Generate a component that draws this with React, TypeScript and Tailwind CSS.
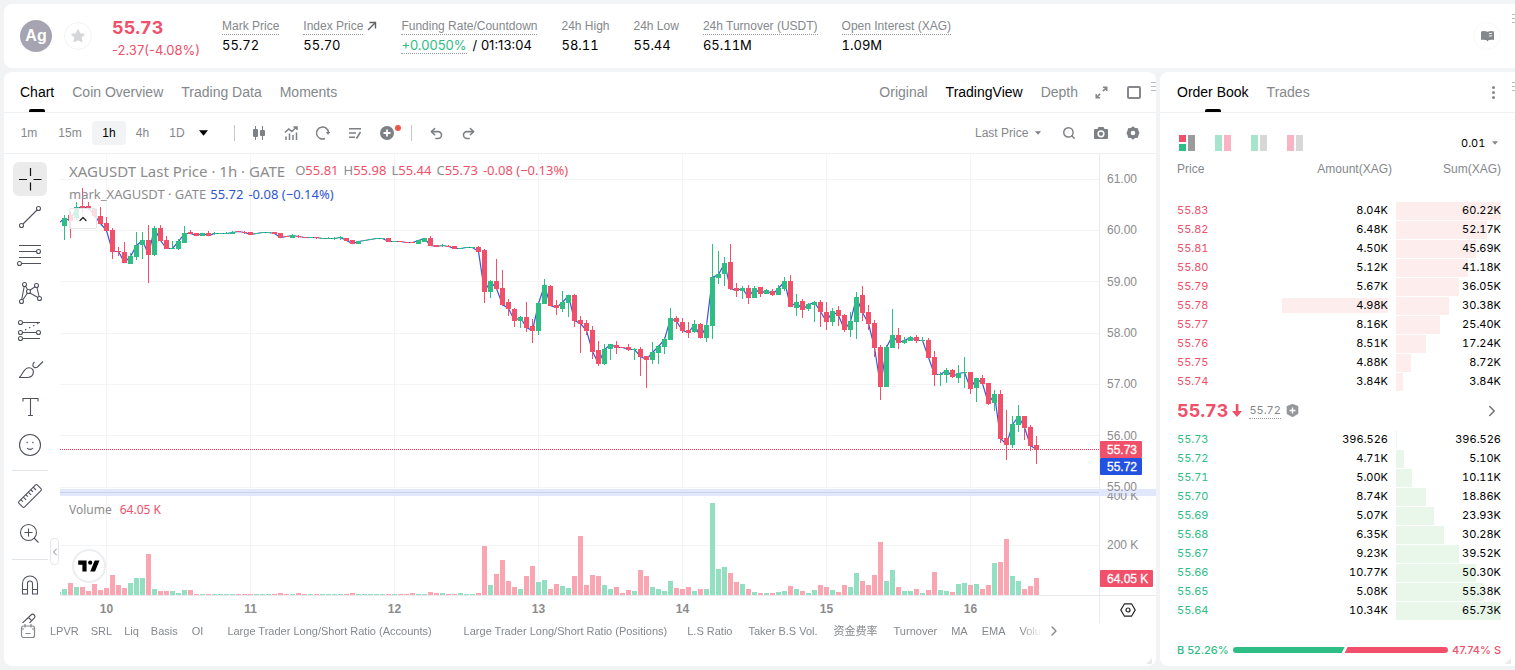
import React from "react";
import { Search, ChevronRight, ChevronUp, ChevronLeft, Undo2, Redo2 } from "lucide-react";

const UP = "#2ebd85";
const DOWN = "#f0506a";

/* [direction, body top, body bottom, wick top, wick bottom, volume] */
type Candle = ["g" | "r", number, number, number, number, number];

const candles: Candle[] = [
  ["g", 218, 226, 215, 240, 6], ["r", 215, 221, 211, 238, 12], ["g", 207, 218, 202, 220, 8], ["r", 206, 208, 188, 212, 8],
  ["r", 206, 208, 202, 210, 4], ["r", 209, 216, 208, 218, 11], ["r", 216, 224, 207, 224, 5], ["r", 223, 231, 217, 231, 7],
  ["r", 230, 252, 228, 259, 20], ["r", 251, 252, 247, 256, 10], ["r", 252, 263, 242, 263, 7], ["g", 256, 264, 253, 264, 12],
  ["g", 245, 257, 232, 260, 17], ["g", 240, 245, 232, 259, 17], ["r", 240, 255, 225, 283, 41], ["g", 228, 255, 226, 256, 6],
  ["r", 228, 241, 225, 241, 4], ["r", 240, 249, 236, 249, 4], ["g", 248, 249, 241, 249, 4], ["g", 241, 249, 239, 250, 2],
  ["g", 233, 243, 226, 243, 5], ["r", 232, 234, 230, 234, 5], ["r", 233, 236, 233, 236, 1], ["g", 233, 236, 233, 236, 1],
  ["r", 233, 236, 231, 236, 1], ["g", 233, 234, 232, 235, 1], ["g", 233, 234, 233, 234, 1], ["g", 233, 234, 232, 234, 1],
  ["g", 232, 234, 231, 234, 1], ["r", 231, 232, 231, 232, 1], ["r", 232, 233, 231, 234, 1], ["r", 232, 235, 232, 235, 1],
  ["g", 233, 234, 233, 234, 1], ["g", 232, 233, 232, 233, 1], ["g", 232, 233, 232, 233, 1], ["r", 232, 234, 232, 234, 1],
  ["r", 233, 238, 233, 238, 2], ["r", 236, 237, 236, 237, 1], ["g", 235, 238, 234, 238, 1], ["r", 236, 237, 235, 238, 2],
  ["r", 237, 238, 237, 238, 1], ["g", 237, 238, 237, 238, 1], ["r", 237, 238, 237, 239, 1], ["g", 238, 239, 238, 239, 1],
  ["g", 238, 239, 237, 239, 1], ["g", 238, 239, 237, 240, 1], ["g", 237, 238, 236, 240, 1], ["r", 238, 241, 238, 241, 1],
  ["r", 240, 244, 240, 244, 2], ["g", 241, 244, 241, 244, 1], ["g", 240, 241, 240, 241, 1], ["g", 239, 240, 239, 240, 1],
  ["g", 238, 239, 238, 239, 1], ["g", 238, 239, 238, 239, 1], ["r", 238, 242, 238, 242, 1], ["g", 241, 242, 241, 242, 1],
  ["r", 241, 242, 241, 242, 1], ["r", 242, 243, 242, 243, 1], ["r", 242, 243, 242, 243, 2], ["g", 240, 244, 240, 244, 1],
  ["g", 238, 242, 238, 242, 1], ["r", 238, 246, 236, 246, 3], ["r", 245, 247, 245, 247, 2], ["g", 245, 246, 244, 247, 2],
  ["r", 246, 247, 245, 247, 1], ["r", 246, 249, 246, 249, 1], ["g", 248, 249, 248, 249, 2], ["g", 247, 248, 247, 248, 1],
  ["g", 247, 248, 247, 248, 1], ["r", 247, 252, 246, 252, 2], ["r", 250, 292, 249, 303, 49], ["g", 281, 292, 280, 298, 10],
  ["r", 281, 289, 259, 290, 21], ["r", 288, 305, 270, 306, 35], ["r", 302, 309, 299, 316, 14], ["r", 309, 321, 308, 327, 8],
  ["g", 317, 321, 316, 328, 6], ["r", 317, 328, 302, 332, 19], ["r", 326, 331, 319, 343, 29], ["g", 303, 331, 303, 335, 13],
  ["g", 285, 304, 279, 304, 15], ["r", 286, 306, 285, 306, 6], ["r", 305, 308, 300, 315, 11], ["g", 302, 309, 291, 312, 9],
  ["g", 295, 303, 295, 317, 7], ["r", 295, 321, 294, 327, 19], ["r", 320, 324, 316, 353, 59], ["r", 323, 331, 320, 335, 10],
  ["r", 330, 352, 326, 359, 20], ["r", 350, 364, 341, 366, 19], ["g", 349, 364, 344, 365, 10], ["g", 344, 349, 344, 360, 6],
  ["r", 345, 348, 341, 354, 8], ["r", 347, 348, 347, 348, 2], ["r", 347, 350, 344, 351, 5], ["g", 349, 350, 348, 360, 4],
  ["r", 349, 357, 347, 376, 25], ["r", 356, 360, 356, 388, 19], ["g", 352, 360, 342, 364, 8], ["g", 346, 353, 345, 364, 6],
  ["g", 339, 347, 337, 354, 4], ["g", 318, 340, 308, 340, 14], ["r", 318, 322, 316, 329, 7], ["r", 322, 331, 318, 333, 6],
  ["r", 330, 333, 322, 338, 8], ["g", 324, 332, 320, 333, 4], ["r", 324, 338, 323, 338, 6], ["g", 325, 338, 323, 342, 6],
  ["g", 277, 326, 244, 339, 92], ["g", 274, 278, 251, 284, 26], ["g", 263, 274, 257, 286, 28], ["r", 262, 289, 244, 290, 22],
  ["r", 288, 291, 283, 297, 13], ["g", 288, 291, 286, 299, 11], ["r", 288, 298, 285, 304, 6], ["g", 288, 298, 286, 298, 3],
  ["r", 287, 294, 287, 297, 2], ["g", 290, 294, 289, 294, 2], ["r", 291, 295, 289, 296, 2], ["g", 288, 295, 285, 295, 3],
  ["g", 281, 289, 277, 291, 4], ["r", 281, 307, 275, 307, 9], ["g", 302, 308, 294, 316, 6], ["r", 301, 310, 299, 318, 4],
  ["g", 304, 309, 303, 311, 2], ["g", 302, 305, 301, 322, 5], ["r", 302, 312, 300, 327, 10], ["r", 312, 322, 302, 330, 8],
  ["g", 311, 322, 308, 326, 5], ["r", 310, 316, 306, 326, 3], ["r", 315, 330, 314, 332, 10], ["g", 321, 330, 312, 337, 8],
  ["g", 297, 322, 292, 339, 22], ["r", 295, 313, 286, 321, 14], ["r", 312, 324, 305, 330, 10], ["r", 323, 348, 320, 357, 20],
  ["r", 347, 387, 345, 400, 53], ["g", 347, 387, 345, 387, 14], ["g", 335, 348, 309, 348, 25], ["r", 335, 343, 328, 349, 8],
  ["g", 340, 343, 337, 344, 4], ["g", 337, 341, 336, 341, 4], ["r", 337, 341, 335, 343, 6], ["g", 340, 341, 337, 342, 2],
  ["r", 340, 358, 338, 358, 5], ["r", 357, 375, 351, 386, 23], ["g", 374, 375, 372, 386, 5], ["g", 370, 375, 368, 383, 4],
  ["r", 370, 377, 369, 378, 3], ["g", 373, 378, 365, 383, 11], ["g", 372, 373, 357, 388, 12], ["r", 372, 389, 372, 394, 10],
  ["g", 378, 388, 378, 402, 11], ["r", 378, 384, 375, 385, 6], ["r", 383, 404, 383, 405, 10], ["g", 394, 403, 390, 411, 32],
  ["r", 394, 439, 390, 443, 33], ["r", 438, 445, 410, 460, 56], ["g", 424, 445, 416, 448, 19], ["g", 416, 425, 405, 432, 14],
  ["r", 416, 428, 416, 440, 6], ["r", 427, 446, 425, 451, 9], ["r", 445, 450, 436, 464, 17],
];

const priceGrid = [179, 230, 281, 333, 384, 435, 487];
const days = [10, 11, 12, 13, 14, 15, 16];
const PLOT_LEFT = 60;
const PLOT_WIDTH = 1039;

function Plot() {
  const closes = candles
    .map(([d, top, bottom], i) => `${64.5 + i * 6},${d === "g" ? top + 0.5 : bottom - 0.5}`)
    .join(" ");
  return (
    <svg
      viewBox="60 154 1039 442"
      preserveAspectRatio="none"
      className="block h-[442px] w-full"
      role="img"
      aria-label="XAGUSDT hourly candles and volume"
    >
      {priceGrid.map((y) => (
        <rect key={y} x="60" y={y} width="1039" height="1" fill="#f3f4f5" />
      ))}
      <rect x="60" y="545" width="1039" height="1" fill="#f3f4f5" />
      {days.map((d, i) => (
        <rect key={d} x={106 + i * 144} y="154" width="1" height="442" fill="#f3f4f5" />
      ))}
      <rect x="60" y="489" width="1039" height="7" fill="#e2e8fb" />
      <rect x="60" y="492" width="1039" height="1" fill="#ccd0ea" />
      <rect x="60" y="592" width="1" height="3" fill="#93dfc1" />
      {candles.map(([d, , , , , v], i) => (
        <rect key={i} x={62 + i * 6} y={595 - v} width="5" height={v} fill={d === "g" ? "#93dfc1" : "#f9a5b2"} />
      ))}
      <polyline points={`60,222 ${closes}`} fill="none" stroke="#3a55d8" strokeWidth="1.2" />
      {candles.map(([d, top, bottom, high, low], i) => (
        <g key={i} fill={d === "g" ? UP : DOWN}>
          <rect x={64 + i * 6} y={high} width="1" height={low - high} />
          <rect x={62 + i * 6} y={top} width="5" height={bottom - top} />
        </g>
      ))}
      <line x1="60" x2="1099" y1="449.5" y2="449.5" stroke="#e0406a" strokeDasharray="1 1" />
      <rect x="60" y="595" width="1039" height="1" fill="#e8eaed" />
    </svg>
  );
}

const axisTicks: [string, number][] = [
  ["61.00", 179], ["60.00", 230], ["59.00", 282], ["58.00", 333], ["57.00", 384], ["56.00", 436], ["55.00", 487], ["200 K", 545],
];

function PriceAxis() {
  return (
    <svg viewBox="0 154 57 442" width="57" height="442" className="block font-['Liberation_Sans',sans-serif] text-xs" aria-label="Price scale">
      <rect x="0" y="154" width="1" height="442" fill="#e8eaed" />
      <clipPath id="below-divider"><rect x="0" y="493" width="57" height="20" /></clipPath>
      <rect x="0" y="489" width="57" height="7" fill="#e2e8fb" />
      <g fill="#8c8c8e">
        {axisTicks.map(([label, y]) => (
          <text key={label} x="8" y={y + 4}>{label}</text>
        ))}
        <text x="8" y="500" clipPath="url(#below-divider)">400 K</text>
      </g>
      <rect x="1" y="441" width="42" height="17" rx="1" fill={DOWN} />
      <rect x="1" y="458" width="42" height="17" rx="1" fill="#2352e0" />
      <rect x="1" y="570" width="53" height="17" rx="1" fill={DOWN} />
      <g fill="#fff" stroke="#fff" strokeWidth="0.3">
        <text x="8" y="454">55.73</text>
        <text x="8" y="471">55.72</text>
        <text x="8" y="583">64.05 K</text>
      </g>
      <rect x="0" y="595" width="57" height="1" fill="#e8eaed" />
    </svg>
  );
}

function ToolIcon({ children }: { children: React.ReactNode }) {
  return (
    <svg viewBox="0 0 28 28" width="28" height="28" fill="none" stroke="#50535c" strokeWidth="1.1" aria-hidden="true">
      {children}
    </svg>
  );
}

const drawTools: { name: string; icon: React.ReactNode }[] = [
  {
    name: "Trend line",
    icon: <><circle cx="5.5" cy="22.5" r="2" /><circle cx="22.5" cy="5.5" r="2" /><path d="M7 21 21 7" /></>,
  },
  {
    name: "Fib retracement",
    icon: <><path d="M3 4.500h22M3 10.500h17.500M3 16.500h22M5.500 22.500H25" /><circle cx="22.500" cy="10.500" r="2" /><circle cx="3.500" cy="22.500" r="2" /></>,
  },
  {
    name: "Patterns",
    icon: <><circle cx="8.500" cy="5.500" r="2" /><circle cx="20.500" cy="6.500" r="2" /><circle cx="12.500" cy="12.500" r="2" /><circle cx="5.500" cy="22.500" r="2" /><circle cx="23.500" cy="19.500" r="2" /><path d="m8.200 7.500-2.500 13M9.600 7.200l2 3.600M14 11.200l5-3.400M21 8.500l2 9M14 14l8 4.500M11.300 14.200 6.700 21" /></>,
  },
  {
    name: "Prediction",
    icon: <><circle cx="4.500" cy="5.500" r="2" /><circle cx="4.500" cy="15.500" r="2" /><circle cx="22.500" cy="15.500" r="2" /><circle cx="4.500" cy="21.500" r="2" /><path d="M6.500 5.500H24M6.500 15.500h14M6.500 21.500H24" /><path d="m9 13 14-7" strokeDasharray="1.500 3" /></>,
  },
  {
    name: "Brush",
    icon: <path d="M3 22.500c3-1 4-8 8.500-9.500 4-1 7 2 5.500 6-1 2.500-3 3.500-6 3.500H3ZM18.500 7c-2 2-2.500 4 0 5.500 1.500.5 2 .2 3-.5l5.500-5.500" />,
  },
  {
    name: "Text",
    icon: <path d="M7 8.500v-3h15v3M14.500 5.500v17M12 22.500h5" />,
  },
  {
    name: "Icons",
    icon: <><circle cx="14" cy="14" r="10.500" /><path d="M11 17c1.500 1.800 4.500 1.800 6 0" /><path d="M10.500 11.500h1.200M16.300 11.500h1.200" strokeWidth="1.600" /></>,
  },
];

function LeftTools() {
  const btn = "flex size-[34px] shrink-0 items-center justify-center rounded-md";
  return (
    <div className="relative flex h-[469px] w-14 shrink-0 flex-col items-center pt-2 pr-1">
      <div className="flex h-full flex-col items-center gap-1 overflow-hidden">
        <button aria-label="Crosshair" className="flex size-[34px] shrink-0 items-center justify-center rounded-md bg-[#ebebeb]">
          <svg viewBox="0 0 28 28" width="28" height="28" stroke="#111" strokeWidth="1.200" aria-hidden="true">
            <path d="M14.500 3v8M14.500 17.500v8M3 14.500h8M17.500 14.500h8" />
          </svg>
        </button>
        {drawTools.map((t) => (
          <button key={t.name} aria-label={t.name} className={btn}><ToolIcon>{t.icon}</ToolIcon></button>
        ))}
        <hr className="my-1 w-9 border-[#e0e3e8]" />
        <button aria-label="Measure" className={btn}>
          <ToolIcon>
            <g transform="rotate(-45 14 14)">
              <rect x="1" y="10" width="26" height="8" rx="1.500" />
              <path d="M5 10v3M8.500 10v4M12 10v3M15.500 10v4M19 10v3M22.500 10v4" />
            </g>
          </ToolIcon>
        </button>
        <button aria-label="Zoom in" className={btn}>
          <ToolIcon><circle cx="12.500" cy="12.500" r="8" /><path d="M12.500 8.500v8M8.500 12.500h8M18 18l4.500 4.500" /></ToolIcon>
        </button>
        <hr className="my-1 w-9 border-[#e0e3e8]" />
        <button aria-label="Magnet" className={btn}>
          <ToolIcon>
            <path d="M6.500 23V12.500a7.500 7.500 0 0 1 15 0V23h-5V12.500a2.500 2.500 0 0 0-5 0V23ZM6.500 18.500h5M16.500 18.500h5" />
          </ToolIcon>
        </button>
        <button aria-label="Lock drawing" className={btn}>
          <ToolIcon><path d="m6 14.500 9-8.500c1-1 2.200-1 3.200 0s1 2.200 0 3.200L12.500 15M12.500 8.500l3.200 3.200M17.500 15.500H22" /></ToolIcon>
        </button>
      </div>
      <button aria-label="Hide drawing toolbar" className="absolute right-px bottom-[58px] flex h-[27px] w-[9px] items-center justify-center rounded-sm border border-[#e4e6ea] bg-white text-[#8a8d94]">
        <ChevronLeft size={12} className="shrink-0" />
      </button>
    </div>
  );
}

function DragMark() {
  return (
    <span aria-hidden="true" className="flex w-[5px] flex-col gap-[3px]">
      <i className="h-px bg-[#b9bdc2]" /><i className="h-px bg-[#b9bdc2]" /><i className="h-px bg-[#b9bdc2]" />
    </span>
  );
}

function ResizeCorner() {
  return (
    <svg viewBox="0 0 6 6" width="6" height="6" fill="#e9ebec" className="absolute right-1 bottom-0.5" aria-hidden="true">
      <path d="M6 0v6H0Z" />
    </svg>
  );
}

function Stat({ label, children, dotted, arrow }: { label: string; children: React.ReactNode; dotted?: boolean; arrow?: boolean }) {
  return (
    <div className="flex flex-col items-start">
      <dt className="flex text-xs leading-4 whitespace-nowrap text-[#84888c]">
        <span className={dotted ? "border-b border-dotted border-[#9a9da1]" : "border-b border-transparent"}>{label}</span>
        {arrow && (
          <svg viewBox="0 0 10 10" width="10" height="10" className="mt-[3px] ml-1" fill="none" stroke="#5f6368" strokeWidth="1.400" aria-hidden="true">
            <path d="M1 9 8.500 1.500M2.500 1.500h6V7.500" />
          </svg>
        )}
      </dt>
      <dd className="mt-px flex h-[18px] items-center font-['Inter',sans-serif] text-[13px] leading-4 whitespace-nowrap text-black tabular-nums">{children}</dd>
    </div>
  );
}

function Header() {
  return (
    <header className="relative flex h-16 items-center rounded-l-lg bg-white pr-3.5 pl-4">
      <span className="flex size-8 items-center justify-center rounded-full bg-[#a5a4b0] text-base leading-none font-bold text-white">Ag</span>
      <button aria-label="Add to favourites" className="ml-3 flex size-7 items-center justify-center rounded-full border border-[#f2f3f4]">
        <svg viewBox="0 0 24 24" width="16" height="16" fill="#d5d6d8" stroke="#d5d6d8" strokeWidth="2" strokeLinejoin="round" aria-hidden="true">
          <path d="m12 3 2.800 5.700 6.200.9-4.500 4.400 1.100 6.200L12 17.300l-5.600 2.900L7.500 14 3 9.600l6.200-.9Z" />
        </svg>
      </button>
      <div className="ml-5 w-[86px] pt-[3px] font-['Inter',sans-serif] whitespace-nowrap text-[#f0506a]">
        <div className="text-lg leading-6 font-bold tabular-nums">55.73</div>
        <div className="text-[13px] leading-5">-2.37(-4.08%)</div>
      </div>
      <dl className="ml-6 flex gap-6">
        <Stat label="Mark Price" dotted>55.72</Stat>
        <Stat label="Index Price" dotted arrow>55.70</Stat>
        <Stat label="Funding Rate/Countdown" dotted>
          <span className="border-b border-dotted border-[#9a9da1] text-[#2ebd85] proportional-nums">+0.0050%</span>
          <span className="ml-1.5 proportional-nums">/ 01:13:04</span>
        </Stat>
        <Stat label="24h High">58.11</Stat>
        <Stat label="24h Low">55.44</Stat>
        <Stat label="24h Turnover (USDT)" dotted>65.11M</Stat>
        <Stat label="Open Interest (XAG)" dotted>1.09M</Stat>
      </dl>
      <button aria-label="Guide" className="ml-auto flex size-7 items-center justify-center rounded-full border border-[#f8f9fa]">
        <svg viewBox="0 0 14 12" width="13" height="12" aria-hidden="true">
          <path d="M0 1.200C2.500.2 5 .6 7 1.500 9 .6 11.500.2 14 1.200v9c-2.500-.5-4.500-.3-6 .4L7 12l-1-1.400c-1.500-.7-3.500-.9-6-.4Z" fill="#84888c" />
          <path d="M8.500 3.500 12 3M8.500 6.200l3.500-.5" stroke="#fff" />
        </svg>
      </button>
      <div className="absolute top-2.5 -right-0.5"><DragMark /></div>
    </header>
  );
}

function Tab({ children, active }: { children: React.ReactNode; active?: boolean }) {
  return (
    <button className={active ? "relative h-full text-black" : "h-full text-[#84888c]"}>
      {children}
      {active && <span className="absolute bottom-0 left-1/2 h-[3px] w-4 -translate-x-1/2 rounded-t-xs bg-black" />}
    </button>
  );
}

function ChartToolbar() {
  const iconBtn = "flex size-8 items-center justify-center";
  const g = "#7d8084";
  return (
    <div className="flex h-[41px] items-center border-b border-[#eff0f2] pr-[7px] pl-1.5 text-xs text-[#84888c]">
      <div className="flex items-center">
        <button className="h-6 w-[38px]">1m</button>
        <button className="h-6 w-11">15m</button>
        <button className="h-6 w-[34px] rounded bg-[#f2f3f5] text-black">1h</button>
        <button className="h-6 w-[33px]">4h</button>
        <button className="h-6 w-9">1D</button>
        <button aria-label="More intervals" className="flex h-6 w-4 items-center justify-center">
          <svg viewBox="0 0 10 6" width="9" height="6" aria-hidden="true"><path d="M0 0h10L5 6Z" /></svg>
        </button>
      </div>
      <span className="mr-2 ml-[23px] h-4 w-px bg-[#c5c8cc]" />
      <button aria-label="Candle style" className={iconBtn}>
        <svg viewBox="0 0 14 14" width="14" height="14" fill={g} aria-hidden="true">
          <path d="M3 0h1v14H3zM10 0h1v14h-1z" /><rect x="1" y="3" width="5" height="8" rx="1" /><rect x="8" y="4" width="5" height="6" rx="1" />
        </svg>
      </button>
      <button aria-label="Indicators" className={iconBtn}>
        <svg viewBox="0 0 14 14" width="14" height="14" fill="none" stroke={g} strokeWidth="1.500" aria-hidden="true">
          <path d="m.8 6.500 4-3.500 3 2.500L12.500 1M9.500 1H13v3M2 14v-3.500M5.500 14V7.500M9 14V9M12.500 14V6.500" />
        </svg>
      </button>
      <button aria-label="Replay" className={iconBtn}>
        <svg viewBox="0 0 14 14" width="14" height="14" fill="none" stroke={g} strokeWidth="1.500" aria-hidden="true">
          <path d="M9 12.500A6 6 0 1 1 12.500 6.500" /><path d="M9.800 6h4.400L12 8.800Z" fill={g} stroke="none" />
        </svg>
      </button>
      <button aria-label="Orders on chart" className={iconBtn}>
        <svg viewBox="0 0 14 14" width="14" height="14" fill="none" stroke={g} strokeWidth="1.600" aria-hidden="true">
          <path d="M1 2.800h12M1 7h7M1 11.200h6M12.500 6 8.500 12.500" />
        </svg>
      </button>
      <button aria-label="Add alert" className="relative flex size-8 items-center justify-center">
        <svg viewBox="0 0 14 14" width="14" height="14" aria-hidden="true">
          <circle cx="7" cy="7" r="7" fill={g} /><path d="M7 3.500v7M3.500 7h7" stroke="#fff" strokeWidth="1.800" />
        </svg>
        <span className="absolute top-2 right-0.5 size-1.5 rounded-full bg-[#ee5544]" />
      </button>
      <span className="mx-2 h-4 w-px bg-[#c5c8cc]" />
      <button aria-label="Undo" className={iconBtn}><Undo2 size={15} color={g} strokeWidth={2.5} /></button>
      <button aria-label="Redo" className={iconBtn}><Redo2 size={15} color={g} strokeWidth={2.5} /></button>
      <div className="relative ml-auto flex items-center">
        <select aria-label="Price type" className="w-[68px] appearance-none bg-transparent">
          <option>Last Price</option>
          <option>Mark Price</option>
        </select>
        <svg viewBox="0 0 10 6" width="6" height="4" fill={g} className="pointer-events-none absolute right-0.5" aria-hidden="true"><path d="M0 0h10L5 6Z" /></svg>
      </div>
      <div className="ml-2.5 flex">
        <button aria-label="Search" className={iconBtn}><Search size={14} color={g} strokeWidth={2.5} /></button>
        <button aria-label="Screenshot" className={iconBtn}>
          <svg viewBox="0 0 14 14" width="14" height="14" aria-hidden="true">
            <path fill={g} fillRule="evenodd" d="M4.500 1h5l1 2H13a1 1 0 0 1 1 1v8a1 1 0 0 1-1 1H1a1 1 0 0 1-1-1V4a1 1 0 0 1 1-1h2.500ZM7 4.200a3.600 3.600 0 1 0 0 7.200 3.600 3.600 0 0 0 0-7.200Zm0 1.500a2.100 2.100 0 1 1 0 4.200 2.100 2.100 0 0 1 0-4.200Z" />
          </svg>
        </button>
        <button aria-label="Settings" className={iconBtn}>
          <svg viewBox="0 0 14 14" width="14" height="14" aria-hidden="true">
            <path fill={g} fillRule="evenodd" d="m7 .3 2.200 1.600 2.700.3.600 2.600L13.500 7l-1 2.200-.6 2.600-2.700.3L7 13.700l-2.200-1.600-2.700-.3-.6-2.600L.5 7l1-2.200.6-2.600 2.700-.3ZM7 4.700a2.300 2.300 0 1 0 0 4.600 2.300 2.300 0 0 0 0-4.600Z" />
          </svg>
        </button>
      </div>
    </div>
  );
}

function Legend() {
  return (
    <div className="absolute top-2 left-[9px] font-['Noto_Sans',sans-serif] text-[13px] whitespace-nowrap text-[#8c8c8e]">
      <div className="flex h-[18px] items-center">
        <span className="mr-2.5 text-[15px]">XAGUSDT Last Price · 1h · GATE</span>
        <span className="flex gap-[5px] text-[#f0506a]">
          <span><span className="text-[#8c8c8e]">O</span>55.81</span>
          <span><span className="text-[#8c8c8e]">H</span>55.98</span>
          <span><span className="text-[#8c8c8e]">L</span>55.44</span>
          <span><span className="text-[#8c8c8e]">C</span>55.73</span>
          <span>-0.08 (−0.13%)</span>
        </span>
      </div>
      <div className="mt-1.5 flex h-[18px] items-center gap-1">
        <span>mark_XAGUSDT · GATE</span>
        <span className="flex gap-[5px] text-[#2f55d4]"><span>55.72</span><span>-0.08 (−0.14%)</span></span>
      </div>
      <button aria-label="Collapse legend" className="mt-1 flex h-[21px] w-7 items-center justify-center rounded-xs border border-[#e4e6ea] bg-white/80 text-[#222]">
        <ChevronUp size={12} strokeWidth={2.5} />
      </button>
    </div>
  );
}

const indicators: { name: string; cls: string }[] = [
  { name: "LPVR", cls: "" }, { name: "SRL", cls: "ml-3" }, { name: "Liq", cls: "ml-3" }, { name: "Basis", cls: "ml-3" },
  { name: "OI", cls: "ml-3.5" }, { name: "Large Trader Long/Short Ratio (Accounts)", cls: "ml-6" },
  { name: "Large Trader Long/Short Ratio (Positions)", cls: "ml-8" }, { name: "L.S Ratio", cls: "ml-5" },
  { name: "Taker B.S Vol.", cls: "ml-4" }, { name: "资金费率", cls: "ml-4" }, { name: "Turnover", cls: "ml-4" },
  { name: "MA", cls: "ml-3.5" }, { name: "EMA", cls: "ml-3.5" }, { name: "Volume", cls: "ml-3.5" },
];

function ChartPanel() {
  return (
    <section className="relative flex min-w-0 flex-1 flex-col rounded-lg bg-white">
      <nav className="flex h-[41px] items-center gap-[18px] border-b border-[#eff0f2] pr-[15px] pl-4 text-sm text-[#84888c]">
        <Tab active>Chart</Tab>
        <Tab>Coin Overview</Tab>
        <Tab>Trading Data</Tab>
        <Tab>Moments</Tab>
        <div className="ml-auto flex items-center gap-[18px]">
          <button>Original</button>
          <button className="text-black">TradingView</button>
          <button>Depth</button>
        </div>
        <div className="-ml-1 flex items-center gap-4">
          <button aria-label="Expand" className="flex w-[18px] justify-center">
            <svg viewBox="0 0 14 14" width="13" height="13" fill="none" stroke="#84888c" strokeWidth="1.600" aria-hidden="true">
              <path d="M8.500 5.500 12 2M5.500 8.500 2 12M8.500 1.300h4.200v4.200M5.500 12.700H1.300V8.500" />
            </svg>
          </button>
          <button aria-label="Maximise" className="flex w-[15px] justify-center"><span className="h-[13px] w-3.5 rounded-xs border-2 border-[#84888c]" /></button>
        </div>
        <div className="absolute top-2.5 right-0"><DragMark /></div>
      </nav>
      <ChartToolbar />
      <div className="flex">
        <LeftTools />
        <div className="relative min-w-0 flex-1">
          <div className="flex">
            <div className="min-w-0 flex-1"><Plot /></div>
            <div className="w-[57px] shrink-0"><PriceAxis /></div>
          </div>
          <div className="flex h-[27px]">
            <div className="relative min-w-0 flex-1 text-xs font-bold text-[#8c8c8e]">
              {days.map((d, i) => (
                <span
                  key={d}
                  className="absolute top-[5px] -translate-x-1/2 leading-4"
                  style={{ left: `${((106.5 + i * 144 - PLOT_LEFT) / PLOT_WIDTH) * 100}%` }}
                >
                  {d}
                </span>
              ))}
            </div>
            <button aria-label="Scale settings" className="flex w-[57px] shrink-0 items-center justify-center border-l border-[#e8eaed]">
              <svg viewBox="0 0 16 14" width="16" height="14" fill="none" stroke="#222" strokeWidth="1.200" aria-hidden="true">
                <path d="M4.500.8h7L15.200 7l-3.700 6.200h-7L.8 7Z" /><circle cx="8" cy="7" r="2" />
              </svg>
            </button>
          </div>
          <Legend />
          <div className="absolute top-[347px] left-[9px] flex gap-2 font-['Noto_Sans',sans-serif] text-xs leading-[18px] text-[#8c8c8e]">
            <span>Volume</span>
            <span className="text-[#f0506a]">64.05 K</span>
          </div>
          <a href="#tradingview" aria-label="TradingView" className="absolute bottom-10 left-3 flex size-[34px] items-center justify-center rounded-full border-2 border-[#eceef0] bg-white">
            <svg viewBox="0 0 36 20" width="22" height="12" className="shrink-0" aria-hidden="true"><path d="M14 19H7V8H0V1h14ZM28 19h-8L27.500 1h8Z" /><circle cx="20" cy="4.500" r="3.500" /></svg>
          </a>
        </div>
      </div>
      <div className="flex h-4 items-center pr-[94px] pl-4 text-[11px] text-[#84888c]">
        <button aria-label="Indicator calendar" className="mr-3.5 w-4 shrink-0">
          <svg viewBox="0 0 16 16" width="16" height="16" fill="none" stroke="#84888c" strokeWidth="1.200" aria-hidden="true">
            <rect x="1.500" y="3" width="13" height="11.500" rx="2" /><path d="M1.500 6h2.500M12 6h2.500M5 1v3.500M11 1v3.500M5.500 10.500h5" />
          </svg>
        </button>
        <div className="flex min-w-0 flex-1 overflow-hidden font-['Liberation_Sans','Noto_Sans_CJK_SC',sans-serif] [mask-image:linear-gradient(to_right,black_98%,transparent)]">
          {indicators.map((x) => (
            <button key={x.name} className={`shrink-0 whitespace-nowrap ${x.cls}`}>{x.name}</button>
          ))}
        </div>
        <button aria-label="More indicators" className="ml-1"><ChevronRight size={16} /></button>
      </div>
      <ResizeCorner />
    </section>
  );
}

type Row = [string, string, string, number];
const asks: Row[] = [
  ["55.83", "8.04K", "60.22K", 60.22], ["55.82", "6.48K", "52.17K", 52.17], ["55.81", "4.50K", "45.69K", 45.69],
  ["55.80", "5.12K", "41.18K", 41.18], ["55.79", "5.67K", "36.05K", 36.05], ["55.78", "4.98K", "30.38K", 30.38],
  ["55.77", "8.16K", "25.40K", 25.4], ["55.76", "8.51K", "17.24K", 17.24], ["55.75", "4.88K", "8.72K", 8.72],
  ["55.74", "3.84K", "3.84K", 3.84],
];
const bids: Row[] = [
  ["55.73", "396.526", "396.526", 0.4], ["55.72", "4.71K", "5.10K", 5.1], ["55.71", "5.00K", "10.11K", 10.11],
  ["55.70", "8.74K", "18.86K", 18.86], ["55.69", "5.07K", "23.93K", 23.93], ["55.68", "6.35K", "30.28K", 30.28],
  ["55.67", "9.23K", "39.52K", 39.52], ["55.66", "10.77K", "50.30K", 50.3], ["55.65", "5.08K", "55.38K", 55.38],
  ["55.64", "10.34K", "65.73K", 65.73],
];

function BookRows({ rows, side }: { rows: Row[]; side: "ask" | "bid" }) {
  const max = Math.max(...rows.map((r) => r[3]));
  return (
    <tbody className="font-['Inter',sans-serif] tabular-nums">
      {rows.map(([price, amount, sum, depth]) => (
        <tr key={price} className="h-[19px]">
          <td className={side === "ask" ? "p-0 text-[#f0506a]" : "p-0 text-[#2ebd85]"}>{price}</td>
          <td className="p-0 pr-2 text-right">
            <span className={price === "55.78" ? "ml-auto block w-[106px] bg-[#fdeeed] leading-[15px]" : "block leading-[15px]"}>{amount}</span>
          </td>
          <td className="w-[105px] p-0 text-right">
            <div className="relative h-[18px] leading-4">
              <span
                className={side === "ask" ? "absolute inset-y-0 left-0 bg-[#fdeeed]" : "absolute inset-y-0 left-0 bg-[#e9f7ea]"}
                style={{ width: `${(depth / max) * 100}%` }}
              />
              <span className="relative">{sum}</span>
            </div>
          </td>
        </tr>
      ))}
    </tbody>
  );
}

function BookView({ label, left, left2, right, on }: { label: string; left: string; left2?: string; right: string; on?: boolean }) {
  return (
    <button aria-label={label} aria-pressed={!!on} className="flex size-5 items-center justify-center">
      <svg viewBox="0 0 16 16" width="16" height="16" aria-hidden="true">
        {left2 ? (
          <><rect width="7" height="7" fill={left} /><rect y="9" width="7" height="7" fill={left2} /></>
        ) : (
          <rect width="7" height="16" fill={left} />
        )}
        <rect x="9" width="7" height="16" fill={right} />
      </svg>
    </button>
  );
}

function OrderBook() {
  return (
    <section className="relative flex w-[355px] shrink-0 flex-col rounded-l-lg bg-white">
      <nav className="flex h-[41px] items-center gap-[18px] border-b border-[#eff0f2] pr-3.5 pl-[17px] text-sm">
        <Tab active>Order Book</Tab>
        <Tab>Trades</Tab>
        <button aria-label="Order book settings" className="ml-auto flex w-4 flex-col items-center gap-0.5">
          <i className="size-[3px] rounded-full bg-[#84888c]" /><i className="size-[3px] rounded-full bg-[#84888c]" /><i className="size-[3px] rounded-full bg-[#84888c]" />
        </button>
        <div className="absolute top-2.5 -right-0.5"><DragMark /></div>
      </nav>
      <div className="mt-5 flex h-5 items-center gap-4 pr-3.5 pl-[17px]">
        <BookView on label="Default view" left={DOWN} left2={UP} right="#9b9b9b" />
        <BookView label="Side by side" left="#a6e4cd" right="#f9b3c2" />
        <BookView label="Bids" left="#a6e4cd" right="#d7d7d7" />
        <BookView label="Asks" left="#f9b3c2" right="#d7d7d7" />
        <div className="relative ml-auto flex items-center font-['Inter',sans-serif] text-[11px] text-black tabular-nums">
          <select aria-label="Price step" className="w-10 appearance-none bg-transparent">
            <option>0.01</option>
            <option>0.1</option>
          </select>
          <svg viewBox="0 0 10 6" width="6" height="4" fill="#84888c" className="pointer-events-none absolute right-[3px]" aria-hidden="true"><path d="M0 0h10L5 6Z" /></svg>
        </div>
      </div>
      <div className="pr-3.5 pl-[17px]">
        <table className="w-full border-collapse text-[11px] text-black">
          <thead>
            <tr className="h-12 align-top text-xs leading-4 text-[#84888c]">
              <th className="p-0 pt-2 text-left font-normal">Price</th>
              <th className="p-0 pt-2 pr-1 text-right font-normal">Amount(XAG)</th>
              <th className="p-0 pt-2 text-right font-normal">Sum(XAG)</th>
            </tr>
          </thead>
          <BookRows rows={asks} side="ask" />
        </table>
        <div className="flex h-[39px] items-center font-['Inter',sans-serif] tabular-nums">
          <span className="text-lg font-bold text-[#f0506a]">55.73</span>
          <svg viewBox="0 0 10 13" width="10" height="13" className="ml-1" fill={DOWN} aria-hidden="true"><path d="M3.800 0h2.600v7H10l-5 6-5-6h3.800Z" /></svg>
          <span className="ml-[7px] border-b border-dotted border-[#9a9da1] text-[11px] leading-4 text-[#84888c]">55.72</span>
          <svg viewBox="0 0 14 14" width="13" height="13" className="ml-[5px]" aria-hidden="true">
            <path d="m7 0 6 2.500v8L7 14l-6-3.500v-8Z" fill="#94979a" stroke="#94979a" strokeLinejoin="round" strokeWidth=".5" /><path d="M7 3.800v6.400M3.800 7h6.400" stroke="#fff" strokeWidth="1.500" />
          </svg>
          <button aria-label="More market data" className="ml-auto text-[#6f7377]"><ChevronRight size={18} /></button>
        </div>
        <table aria-label="Bids" className="w-full border-collapse text-[11px] text-black">
          <BookRows rows={bids} side="bid" />
        </table>
        <div className="mt-[22px] flex h-4 items-center font-['Inter',sans-serif] text-[11px] font-medium whitespace-nowrap">
          <span className="text-[#2ebd85]">B 52.26%</span>
          <div className="mx-1 flex h-1.5 flex-1">
            <span className="w-[52%] rounded-l-full bg-[#2ebd85] [clip-path:polygon(0_0,100%_0,calc(100%-3px)_100%,0_100%)]" />
            <span className="flex-1 rounded-r-full bg-[#f0506a] [clip-path:polygon(3px_0,100%_0,100%_100%,0_100%)]" />
          </div>
          <span className="text-[#f0506a]">47.74% S</span>
        </div>
      </div>
      <ResizeCorner />
    </section>
  );
}

export default function App() {
  return (
    <div className="flex min-h-screen flex-col gap-1 bg-[#f2f3f4] py-1 pl-1 font-['Liberation_Sans',sans-serif]">
      <Header />
      <main className="flex flex-1 gap-1">
        <ChartPanel />
        <OrderBook />
      </main>
    </div>
  );
}
